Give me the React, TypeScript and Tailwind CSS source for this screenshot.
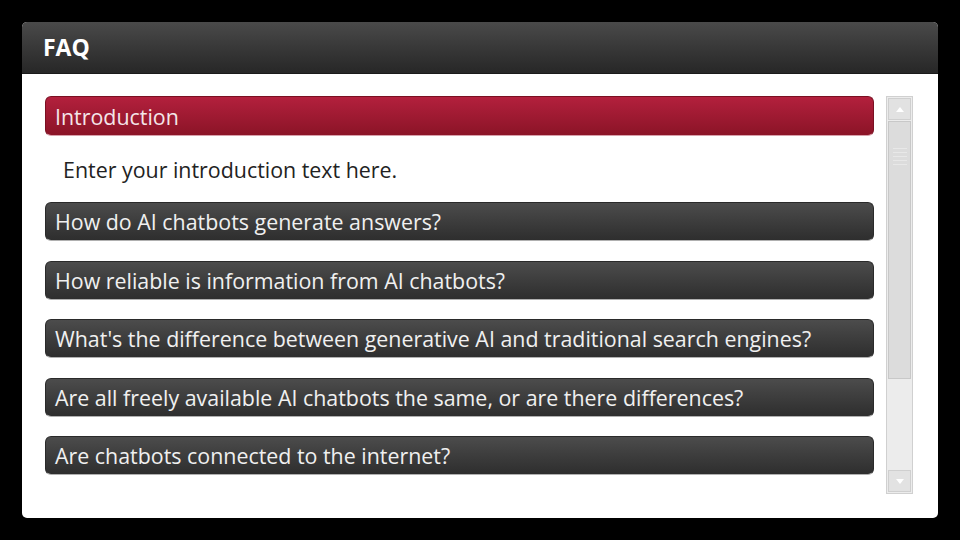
import React from 'react';

const questions = [
  'How do AI chatbots generate answers?',
  'How reliable is information from AI chatbots?',
  "What's the difference between generative AI and traditional search engines?",
  'Are all freely available AI chatbots the same, or are there differences?',
  'Are chatbots connected to the internet?',
];

const ScrollBar: React.FC = () => (
  <div className="w-[27px] h-[398px] shrink-0 border border-[#d0d0d0] bg-[#ececec] flex flex-col p-[1px] gap-[1px]">
    <div className="h-[22px] bg-[#e2e2e2] border border-[#cfcfcf] flex items-center justify-center">
      <svg width="8" height="5" viewBox="0 0 8 5"><path d="M0 5 L4 0 L8 5 Z" fill="#ffffff" /></svg>
    </div>
    <div className="h-[258px] bg-[#dcdcdc] border border-[#c8c8c8] flex flex-col items-center pt-[26px] gap-[3px]">
      <div className="w-[14px] h-[1px] bg-[#e8e8e8]" />
      <div className="w-[14px] h-[1px] bg-[#e8e8e8]" />
      <div className="w-[14px] h-[1px] bg-[#e8e8e8]" />
      <div className="w-[14px] h-[1px] bg-[#e8e8e8]" />
      <div className="w-[14px] h-[1px] bg-[#e8e8e8]" />
    </div>
    <div className="flex-1" />
    <div className="h-[22px] bg-[#e2e2e2] border border-[#cfcfcf] flex items-center justify-center">
      <svg width="8" height="5" viewBox="0 0 8 5"><path d="M0 0 L4 5 L8 0 Z" fill="#ffffff" /></svg>
    </div>
  </div>
);

export default function App() {
  return (
    <div className="w-[960px] h-[540px] bg-black p-[22px] font-['Open_Sans','Liberation_Sans',sans-serif]">
      <div className="w-[916px] h-[496px] rounded-[5px] overflow-hidden bg-white flex flex-col">
        <div className="h-[52px] shrink-0 bg-gradient-to-b from-[#4a4a4a] to-[#272727] border-b border-[#1a1a1a] flex items-center px-[21px]">
          <span className="text-white text-[23px] font-bold leading-none">FAQ</span>
        </div>
        <div className="flex pl-[23px] pt-[22px] gap-[12px]">
          <div className="w-[829px] flex flex-col">
            <div className="h-[40px] rounded-[6px] bg-gradient-to-b from-[#b3203d] to-[#8b1427] border border-[#7a1022] border-b-[#d8a0ab] flex items-center px-[9px] pt-[2px] text-[#f4e6e9] text-[21.4px]">
              Introduction
            </div>
            <div className="h-[66px] flex items-center pl-[18px] text-[#222] text-[21.4px] pt-[2px]">
              Enter your introduction text here.
            </div>
            <div className="flex flex-col gap-[19.5px]">
              {questions.map((q) => (
                <div
                  key={q}
                  className="h-[39px] rounded-[6px] bg-gradient-to-b from-[#4c4c4c] to-[#2e2e2e] border border-[#2a2a2a] border-b-[#b0b0b0] flex items-center px-[9px] pt-[2px] text-[#f0f0f0] text-[21.4px] whitespace-nowrap"
                >
                  {q}
                </div>
              ))}
            </div>
          </div>
          <ScrollBar />
        </div>
      </div>
    </div>
  );
}
